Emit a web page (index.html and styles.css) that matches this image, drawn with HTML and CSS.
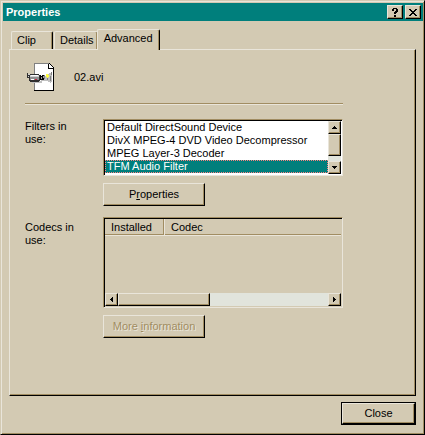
FILE: index.html
```html
<!DOCTYPE html>
<html lang="en">
<head>
    <meta charset="UTF-8">
    <meta name="viewport" content="width=device-width, initial-scale=1.0">
    <title>Properties</title>
    <link rel="stylesheet" href="styles.css">
</head>
<body>
    <div class="window">
        <header class="titlebar">
            <h1>Properties</h1>
            <button type="button" class="raised caption" aria-label="Help">
                <svg width="6" height="9" shape-rendering="crispEdges"><path d="M1 0h4v1h1v3h-1v1h-1v1h-2v-2h1v-1h1v-2h-2v2h-2v-2h1zM2 7h2v2h-2z"/></svg>
            </button>
            <button type="button" class="raised caption" aria-label="Close window">
                <svg width="8" height="7" shape-rendering="crispEdges"><path d="M0 0h2v1h1v1h2v-1h1v-1h2v1h-1v1h-1v1h-1v1h1v1h1v1h1v1h-2v-1h-1v-1h-2v1h-1v1h-2v-1h1v-1h1v-1h1v-1h-1v-1h-1v-1h-1z"/></svg>
            </button>
        </header>

        <!-- Tabs -->
        <div class="tabs" role="tablist">
            <button type="button" class="tab clip" role="tab">Clip</button>
            <button type="button" class="tab" role="tab">Details</button>
            <button type="button" class="tab active" role="tab" aria-selected="true">Advanced</button>
        </div>

        <!-- Advanced -->
        <main class="panel">
            <div class="file">
                <svg class="file-icon" width="32" height="32" shape-rendering="crispEdges" aria-hidden="true">
                    <path fill="#fff" d="M8 3h15l4 4v22H8z"/>
                    <path fill="#808080" d="M7 2h15v1H8v26H7z"/>
                    <path d="M22 2h1v1h1v1h1v1h1v1h1v24H7v-1h19V8h-5V3h1v4h4V6h-1V5h-1V4h-1V3h-1z"/>
                    <!-- shadow and light cone -->
                    <path fill="#c0c0c0" d="M5 20h10v2H5zM14 18h4v2h-4zM18 17h3v2h2v1h1v2h-1v-1h-2v-1h-3z"/>
                    <path fill="#c0c0c0" d="M18 15h1v-1h2v-1h1v-1h2v-1h1v10h-1v-1h-2v-1h-2v-1h-2z"/>
                    <path fill="#808080" d="M17 14h1v4h-1zM20 16h1v3h-1zM24 11h1v3h-1zM23 15h1v5h-1z"/>
                    <path fill="#ffff40" d="M19 13h2v1h1v2h-1v1h-1v-1h-1z"/>
                    <!-- camera -->
                    <path fill="#303030" d="M0 12h1v1h11v1h1v6h-1v1H3v-1H2v-3H0z"/>
                    <path fill="#d0d0d0" d="M1 13h2v1H1zM3 14h9v2H3zM1 15h1v1H1z"/>
                    <path fill="#909090" d="M3 16h9v3H3z"/>
                    <path fill="#fff" d="M4 14h7v1H4zM4 18h3v1H4z"/>
                    <path fill="#c02040" d="M8 18h2v1H8z"/>
                    <path d="M13 14h1v5h-1zM15 14h2v5h-2zM14 15h1v1h-1zM14 18h1v1h-1z"/>
                    <path fill="#a0a0a0" d="M14 16h1v2h-1zM16 15h1v2h-1z"/>
                </svg>
                <span>02.avi</span>
            </div>
            <hr>

            <div class="row">
                <label for="filters">Filters in use:</label>
                <div class="field">
                    <div class="sunken listbox">
                        <select id="filters" size="4">
                            <option>Default DirectSound Device</option>
                            <option>DivX MPEG-4 DVD Video Decompressor</option>
                            <option>MPEG Layer-3 Decoder</option>
                            <option selected>TFM Audio Filter</option>
                        </select>
                        <div class="scroll vertical">
                            <button type="button" class="raised arrow" aria-label="Scroll up"><svg width="5" height="3" shape-rendering="crispEdges"><path d="M2 0h1v1h1v1h1v1H0V2h1V1h1z"/></svg></button>
                            <div class="raised thumb"></div>
                            <button type="button" class="raised arrow" aria-label="Scroll down"><svg width="5" height="3" shape-rendering="crispEdges"><path d="M0 0h5v1H4v1H3v1H2V2H1V1H0z"/></svg></button>
                        </div>
                    </div>
                    <button type="button" class="raised push">P<u>r</u>operties</button>
                </div>
            </div>

            <div class="row codecs">
                <span class="label" id="codecs-label">Codecs in use:</span>
                <div class="field">
                    <div class="sunken listview">
                        <table aria-labelledby="codecs-label">
                            <thead>
                                <tr>
                                    <th class="installed">Installed</th>
                                    <th>Codec</th>
                                </tr>
                            </thead>
                            <tbody></tbody>
                        </table>
                        <div class="scroll horizontal">
                            <button type="button" class="raised arrow" aria-label="Scroll left"><svg width="3" height="5" shape-rendering="crispEdges"><path d="M3 0v5H2V4H1V3H0V2h1V1h1V0z"/></svg></button>
                            <div class="raised thumb"></div>
                            <button type="button" class="raised arrow" aria-label="Scroll right"><svg width="3" height="5" shape-rendering="crispEdges"><path d="M0 0v5h1V4h1V3h1V2H2V1H1V0z"/></svg></button>
                        </div>
                    </div>
                    <button type="button" class="raised push" disabled>More <u>i</u>nformation</button>
                </div>
            </div>
        </main>

        <footer>
            <button type="button" class="close"><span class="raised">Close</span></button>
        </footer>
    </div>
</body>
</html>
```

FILE: styles.css
```css
:root {
    --face: #d3cab3;
    --light: #e9e5da;
    --shadow: #a18d62;
    --track: #e1e4dc;
    --teal: #007f7c;
}
* {
    box-sizing: border-box;
}
body {
    margin: 0;
    font: 11px/13px "Liberation Sans", Arial, sans-serif;
    color: #000;
    background: var(--face);
}
button {
    font: inherit;
    color: inherit;
    padding: 0;
    border: 0;
    background: var(--face);
}
svg {
    display: block;
}

/* 3D edges */
.raised {
    background: var(--face);
    border: 1px solid;
    border-color: var(--light) #000 #000 var(--light);
    box-shadow: inset -1px -1px var(--shadow);
}
.sunken {
    border: 1px solid;
    border-color: var(--shadow) var(--light) var(--light) var(--shadow);
    box-shadow: inset 1px 1px #000;
    padding: 1px;
}

.window {
    display: flex;
    flex-direction: column;
    min-height: 100vh;
    padding: 2px 1px 1px 2px;
    border: 1px solid;
    border-color: var(--face) #000 #000 var(--face);
    box-shadow: inset 1px 1px var(--light), inset -1px -1px var(--shadow);
}
.titlebar {
    display: flex;
    align-items: center;
    gap: 2px;
    height: 18px;
    padding: 0 2px 0 3px;
    background: var(--teal);
}
.titlebar h1 {
    flex: 1;
    margin: 0;
    font-size: 11px;
    color: #fff;
}
.caption {
    display: flex;
    align-items: center;
    justify-content: center;
    width: 16px;
    height: 14px;
}

.tabs {
    display: flex;
    align-items: flex-end;
    margin: 8px 7px 0 8px;
}
.tab {
    height: 18px;
    margin-right: 1px;
    padding: 0 3px 0 5px;
    border: 1px solid;
    border-color: var(--light) #000 transparent var(--light);
    border-bottom: 0;
    border-radius: 2px 2px 0 0;
    box-shadow: inset -1px 0 var(--shadow);
    text-align: left;
}
.tab.clip {
    width: 42px;
}
.tab.active {
    z-index: 1;
    height: 21px;
    margin: 0 0 -1px -2px;
    padding: 0 6px 3px;
}

.panel {
    flex: 1;
    margin: 0 7px 0 6px;
    padding: 11px 72px 0 15px;
    border: 1px solid;
    border-color: var(--light) #000 #000 var(--light);
    box-shadow: inset -1px -1px var(--shadow);
}
.file {
    display: flex;
    align-items: center;
    gap: 15px;
    padding-left: 2px;
}
hr {
    height: 2px;
    margin: 10px 0 14px;
    border: 0;
    border-top: 1px solid var(--shadow);
    border-bottom: 1px solid var(--light);
}
.row {
    display: flex;
    margin-bottom: 11px;
}
.row > label, .row > .label {
    width: 78px;
    padding: 1px 20px 0 0;
}
.codecs > .label {
    padding-top: 4px;
}
.field {
    flex: 1;
}

.listbox {
    display: flex;
    height: 57px;
    background: #fff;
}
.listbox select {
    flex: 1;
    min-width: 0;
    height: 53px;
    padding: 0;
    border: 0;
    outline: 0;
    overflow: hidden;
    font: inherit;
    color: #000;
    background: #fff;
}
.listbox option {
    height: 13px;
    min-height: 13px;
    padding: 0 2px;
    line-height: 13px;
}
.listbox option:checked {
    color: #fff;
    -webkit-text-fill-color: #fff;
    background: linear-gradient(var(--teal), var(--teal));
    outline: 1px dotted #ff8080;
    outline-offset: -1px;
}
.scroll {
    display: flex;
    background: var(--track);
}
.vertical {
    flex-direction: column;
    width: 13px;
}
.vertical .thumb {
    height: 22px;
}
.horizontal {
    height: 13px;
}
.horizontal .thumb {
    width: 92px;
}
.arrow {
    display: flex;
    flex: none;
    align-items: center;
    justify-content: center;
    width: 13px;
    height: 13px;
}
.arrow:last-child {
    margin: auto 0 0 auto;
}

.push {
    display: block;
    width: 102px;
    height: 23px;
    margin-top: 7px;
}
.push:disabled {
    color: var(--shadow);
    text-shadow: 1px 1px var(--light);
}

.listview {
    display: flex;
    flex-direction: column;
    justify-content: space-between;
    height: 91px;
}
.listview table {
    width: 100%;
    border-collapse: separate;
    border-spacing: 0;
}
.listview th {
    height: 17px;
    padding: 1px 6px 0;
    font-weight: normal;
    text-align: left;
    border-bottom: 1px solid var(--light);
    box-shadow: inset 0 -1px var(--shadow);
}
.listview .installed {
    width: 60px;
    border-right: 1px solid var(--light);
    box-shadow: inset -1px -1px var(--shadow);
}

footer {
    display: flex;
    justify-content: flex-end;
    padding: 6px 7px 8px;
}
.close {
    width: 75px;
    height: 23px;
    padding: 1px;
    background: #000;
}
.close span {
    display: block;
    height: 21px;
    line-height: 19px;
}
```
